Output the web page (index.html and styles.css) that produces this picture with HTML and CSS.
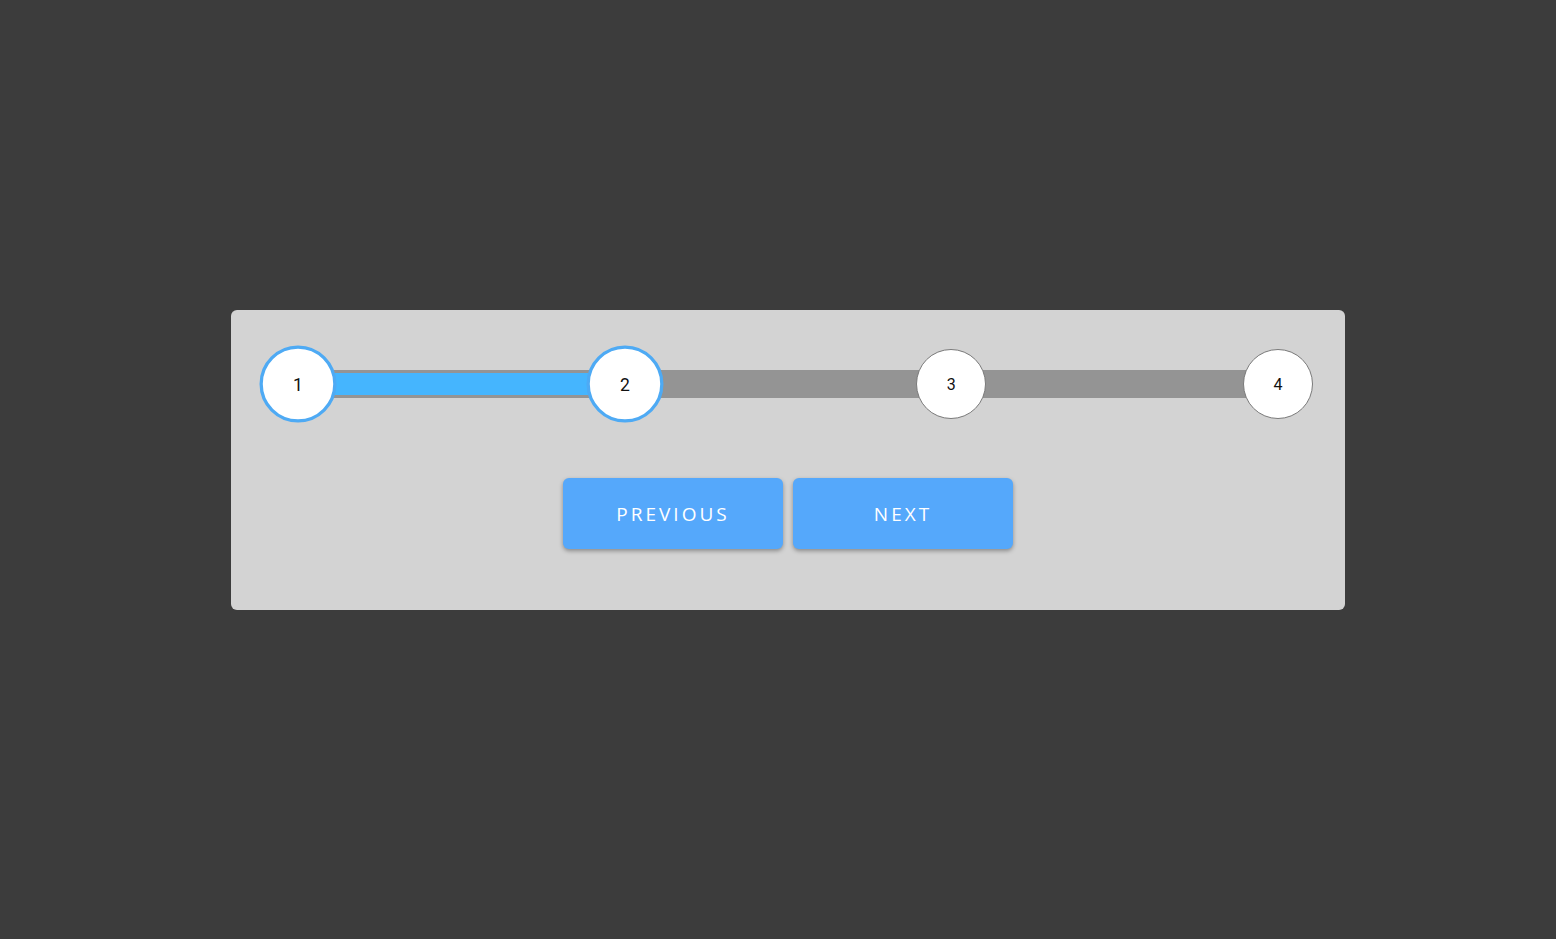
FILE: index.html
```html
<!DOCTYPE html>
<html lang="en">
<head>
    <meta charset="UTF-8">
    <meta name="viewport" content="width=device-width, initial-scale=1.0">
    <title>Progress Steps</title>
    <link rel="stylesheet" href="styles.css">
</head>
<body>
    <div class="container">
        <div class="progress-container">
            <div class="progress-track">
                <div class="progress" style="width: 33.333%"></div>
            </div>
            <div class="circle active">1</div>
            <div class="circle active">2</div>
            <div class="circle">3</div>
            <div class="circle">4</div>
        </div>
        <div class="buttons">
            <button class="btn" id="prev">PREVIOUS</button>
            <button class="btn" id="next">NEXT</button>
        </div>
    </div>
</body>
</html>
```

FILE: styles.css
```css
        * {
            box-sizing: border-box;
        }

        body {
            font-family: 'Roboto', 'Liberation Sans', sans-serif;
            background: #3c3c3c;
            margin: 0;
            padding: 310px 0 0 231px;
            height: 100vh;
        }

        .container {
            width: 1114px;
            height: 300px;
            background: #d3d3d3;
            border-radius: 6px;
            padding: 39px 32px 0;
        }

        .progress-container {
            display: flex;
            justify-content: space-between;
            align-items: center;
            position: relative;
        }

        .progress-track {
            position: absolute;
            left: 35px;
            right: 35px;
            top: 21px;
            height: 28px;
            background: #949494;
            z-index: 0;
        }

        .progress {
            position: absolute;
            left: 0;
            top: 3px;
            height: 22px;
            background: #45b5fe;
        }

        .circle {
            position: relative;
            z-index: 1;
            width: 70px;
            height: 70px;
            border-radius: 50%;
            background: #fff;
            border: 1px solid #7a7a7a;
            display: flex;
            align-items: center;
            justify-content: center;
            font-size: 16px;
            color: #111;
        }

        .circle.active {
            border: 3px solid #4eaaf4;
            transform: scale(1.1);
        }

        .buttons {
            display: flex;
            justify-content: center;
            gap: 10px;
            margin-top: 59px;
        }

        .btn {
            width: 220px;
            height: 71px;
            background: #55a8fb;
            color: #fff;
            border: none;
            border-radius: 6px;
            font-family: 'Open Sans', 'DejaVu Sans', sans-serif;
            font-size: 19px;
            font-weight: 500;
            letter-spacing: 3px;
            box-shadow: 0 2px 4px rgba(0, 0, 0, 0.35);
            cursor: pointer;
            outline: none;
        }
```
